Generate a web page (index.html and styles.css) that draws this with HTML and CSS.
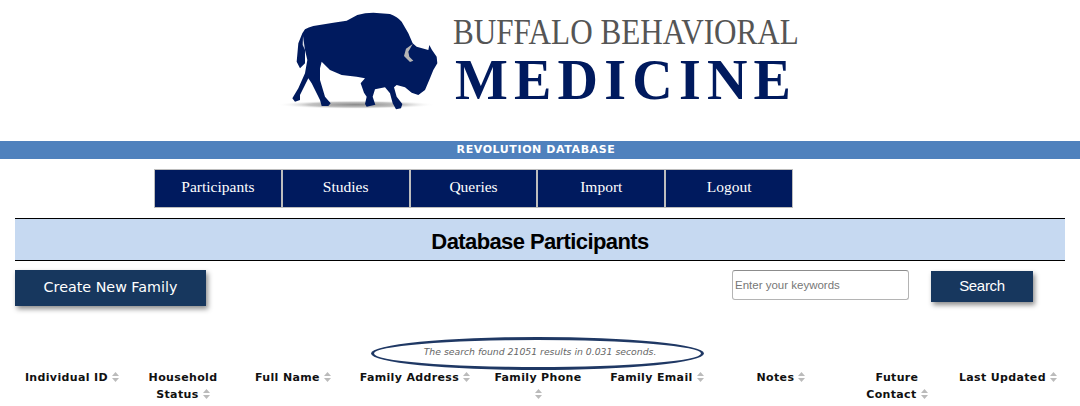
FILE: index.html
```html
<!DOCTYPE html>
<html lang="en">

<head>
    <meta charset="UTF-8">
    <meta name="viewport" content="width=device-width, initial-scale=1.0">
    <title>Database Participants</title>
    <link rel="stylesheet" href="styles.css">
</head>

<body>
    <header class="logo">
        <svg class="bison" viewBox="0 0 510 375" width="170" height="125">
            <defs>
                <radialGradient id="shadow">
                    <stop offset="0" stop-color="#8a8a8a" />
                    <stop offset="0.6" stop-color="#c4c4c4" />
                    <stop offset="1" stop-color="#fff" stop-opacity="0" />
                </radialGradient>
            </defs>
            <ellipse cx="258" cy="314" rx="238" ry="13" fill="url(#shadow)" />
            <path fill="#001a5e" d="M97 100 L105 88 Q115 82 130 78 L190 68 L230 62 L262 45 Q285 38 310 38 L360 42 Q382 50 395 65 L415 100 L428 130 L440 140 L475 150 L478 135 L486 150 L500 170 L502 190 L490 210 L480 235 L465 270 L445 285 L425 278 L405 262 L380 255 L372 262 L380 290 L397 312 L393 325 L378 328 L368 310 L360 280 L345 262 L315 268 L308 290 L316 314 L290 320 L285 312 L290 290 L282 278 L272 250 L285 235 L260 230 L215 225 L180 210 L155 185 L150 205 L150 240 L165 290 L182 310 L175 318 L155 318 L150 300 L125 250 L115 235 L90 285 L90 300 L75 305 L67 295 L85 265 L105 220 L112 180 L105 150 L105 190 L90 205 L80 185 L85 130 Z" />
            <path fill="#dfe2ea" d="M99 108 L105 150 L98 135 Z" />
            <path fill="#b5b5b5" d="M428 132 L408 146 L402 168 L420 186 L430 182 L418 170 L415 155 Z" />
        </svg>
        <div class="logo-text">
            <div class="logo-top">BUFFALO BEHAVIORAL</div>
            <div class="logo-main">MEDICINE</div>
        </div>
    </header>

    <div class="app-bar">REVOLUTION DATABASE</div>

    <nav class="nav">
        <a href="#">Participants</a>
        <a href="#">Studies</a>
        <a href="#">Queries</a>
        <a href="#">Import</a>
        <a href="#">Logout</a>
    </nav>

    <h1 class="page-title">Database Participants</h1>

    <div class="toolbar">
        <button class="btn-create">Create New Family</button>
        <form class="search">
            <input type="text" placeholder="Enter your keywords">
            <button class="btn-search">Search</button>
        </form>
    </div>

    <div class="results"><span class="results-text">The search found 21051 results in 0.031 seconds.</span></div>

    <div class="table-head">
        <div>Individual ID <svg class="sort" viewBox="0 0 7 10"><path d="M3.5 0 7 4H0ZM0 6h7L3.5 10Z" /></svg></div>
        <div>Household Status <svg class="sort" viewBox="0 0 7 10"><path d="M3.5 0 7 4H0ZM0 6h7L3.5 10Z" /></svg></div>
        <div>Full Name <svg class="sort" viewBox="0 0 7 10"><path d="M3.5 0 7 4H0ZM0 6h7L3.5 10Z" /></svg></div>
        <div>Family Address <svg class="sort" viewBox="0 0 7 10"><path d="M3.5 0 7 4H0ZM0 6h7L3.5 10Z" /></svg></div>
        <div>Family Phone<br><svg class="sort" viewBox="0 0 7 10"><path d="M3.5 0 7 4H0ZM0 6h7L3.5 10Z" /></svg></div>
        <div>Family Email <svg class="sort" viewBox="0 0 7 10"><path d="M3.5 0 7 4H0ZM0 6h7L3.5 10Z" /></svg></div>
        <div>Notes <svg class="sort" viewBox="0 0 7 10"><path d="M3.5 0 7 4H0ZM0 6h7L3.5 10Z" /></svg></div>
        <div>Future Contact <svg class="sort" viewBox="0 0 7 10"><path d="M3.5 0 7 4H0ZM0 6h7L3.5 10Z" /></svg></div>
        <div>Last Updated <svg class="sort" viewBox="0 0 7 10"><path d="M3.5 0 7 4H0ZM0 6h7L3.5 10Z" /></svg></div>
    </div>
</body>

</html>
```

FILE: styles.css
```css
* {
    margin: 0;
    padding: 0;
    box-sizing: border-box;
}

body {
    font-family: "DejaVu Sans", sans-serif;
    background: #fff;
}

/* logo */
.logo {
    height: 141px;
    display: flex;
    justify-content: center;
    padding-right: 10px;
}

.bison {
    flex: none;
}

.logo-text {
    width: 347px;
    margin-left: 13px;
    font-family: "Liberation Serif", serif;
}

.logo-top {
    margin-top: 15px;
    font-size: 35px;
    line-height: 36px;
    color: #555;
    white-space: nowrap;
    transform: scaleX(0.89);
    transform-origin: left;
}

.logo-main {
    padding-left: 2px;
    font-size: 56px;
    line-height: 58px;
    font-weight: bold;
    letter-spacing: 6.2px;
    color: #001a5e;
    white-space: nowrap;
}

/* blue strip */
.app-bar {
    height: 18px;
    background: #4f81bd;
    color: #fff;
    font-size: 11px;
    line-height: 18px;
    font-weight: bold;
    letter-spacing: 0.6px;
    text-align: center;
    padding-right: 8px;
}

.nav {
    display: flex;
    width: 639px;
    margin: 10px 0 10px 154px;
}

.nav a {
    flex: 1;
    height: 39px;
    border: 1px solid #bdbdbd;
    background: #001a5e;
    color: #fff;
    font-family: "Liberation Serif", serif;
    font-size: 15.5px;
    line-height: 34px;
    text-align: center;
    text-decoration: none;
}

.page-title {
    height: 43px;
    margin: 0 15px;
    border-top: 1px solid #000;
    border-bottom: 1px solid #000;
    background: #c6d9f1;
    font-family: "Liberation Sans", sans-serif;
    font-size: 22px;
    line-height: 46px;
    letter-spacing: -0.6px;
    color: #000;
    text-align: center;
}

.toolbar {
    display: flex;
    justify-content: space-between;
    align-items: flex-start;
    height: 70px;
    margin-top: 9px;
    padding: 0 47px 0 15px;
}

.btn-create {
    width: 191px;
    height: 36px;
    padding-bottom: 2px;
    border: none;
    background: #17375e;
    color: #fff;
    font-family: "DejaVu Sans", sans-serif;
    font-size: 14.3px;
    box-shadow: 2px 3px 5px rgba(0, 0, 0, 0.45);
}

.search {
    display: flex;
    gap: 22px;
}

.search input {
    width: 177px;
    height: 30px;
    padding: 0 2px;
    border: 1px solid #b4b4b4;
    border-top-color: #8c8c8c;
    border-radius: 3px;
    font-family: "Liberation Sans", sans-serif;
    font-size: 11.5px;
}

.search input::placeholder {
    color: #777;
}

.btn-search {
    width: 102px;
    height: 31px;
    margin-top: 1px;
    padding-bottom: 2px;
    border: none;
    background: #17375e;
    color: #fff;
    font-family: "Liberation Sans", sans-serif;
    font-size: 15px;
    letter-spacing: -0.3px;
    box-shadow: 2px 3px 5px rgba(0, 0, 0, 0.45);
}

/* result count with the oval drawn round it */
.results {
    height: 29px;
    text-align: center;
}

.results-text {
    position: relative;
    display: inline-block;
    font-size: 9.3px;
    line-height: 13px;
    font-style: italic;
    color: #666;
}

.results-text::after {
    content: "";
    position: absolute;
    top: -8px;
    bottom: -12px;
    left: -53px;
    right: -48px;
    border: 3px solid #1f3864;
    border-radius: 50%;
}

.table-head {
    display: grid;
    grid-template-columns: 114px 108px 112px 132px 114px 124px 124px 108px 114px;
    margin: 0 15px;
    font-size: 11px;
    line-height: 17px;
    font-weight: bold;
    letter-spacing: 0.35px;
    color: #111;
    text-align: center;
}

.table-head div {
    padding: 0 7px;
}

.sort {
    display: inline-block;
    width: 7px;
    height: 10px;
    vertical-align: -1px;
    fill: #bbb;
}
```
